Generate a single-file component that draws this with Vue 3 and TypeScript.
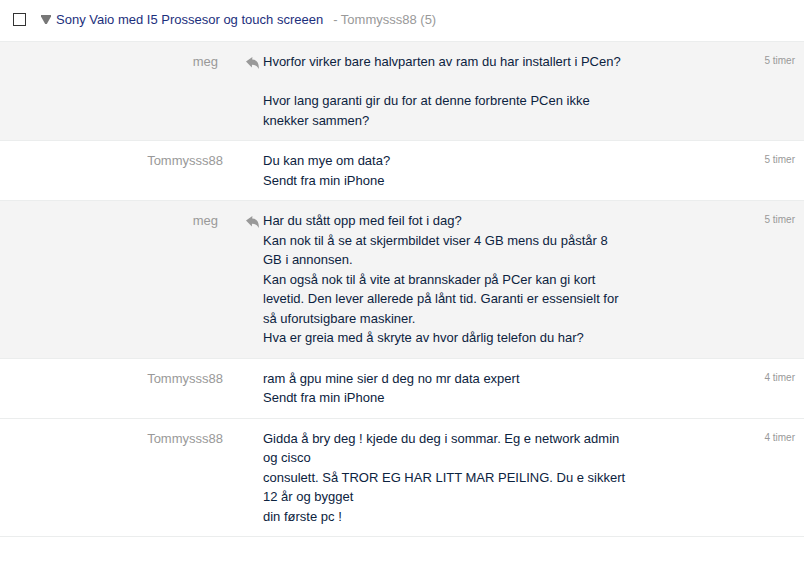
<script setup lang="ts">
interface Message {
  id: number
  sender: string
  own: boolean
  text: string
  time: string
}

const messages: Message[] = [
  {
    id: 1,
    sender: 'meg',
    own: true,
    text: 'Hvorfor virker bare halvparten av ram du har installert i PCen?\n\nHvor lang garanti gir du for at denne forbrente PCen ikke knekker sammen?',
    time: '5 timer',
  },
  { id: 2, sender: 'Tommysss88', own: false, text: 'Du kan mye om data?\nSendt fra min iPhone', time: '5 timer' },
  {
    id: 3,
    sender: 'meg',
    own: true,
    text: 'Har du stått opp med feil fot i dag?\nKan nok til å se at skjermbildet viser 4 GB mens du påstår 8 GB i annonsen.\nKan også nok til å vite at brannskader på PCer kan gi kort levetid. Den lever allerede på lånt tid. Garanti er essensielt for så uforutsigbare maskiner.\nHva er greia med å skryte av hvor dårlig telefon du har?',
    time: '5 timer',
  },
  {
    id: 4,
    sender: 'Tommysss88',
    own: false,
    text: 'ram å gpu mine sier d deg no mr data expert\nSendt fra min iPhone',
    time: '4 timer',
  },
  {
    id: 5,
    sender: 'Tommysss88',
    own: false,
    text: 'Gidda å bry deg ! kjede du deg i sommar. Eg e network admin og cisco\nconsulett. Så TROR EG HAR LITT MAR PEILING. Du e sikkert 12 år og bygget\ndin første pc !',
    time: '4 timer',
  },
]
</script>

<template>
  <main class="thread">
    <header class="thread-head">
      <input class="pick" type="checkbox" aria-label="Velg samtale" />
      <button class="toggle" type="button" aria-label="Skjul meldinger" aria-expanded="true">
        <svg width="10" height="9" viewBox="0 0 10 9" aria-hidden="true">
          <path d="M0 0H10V1.5L5.8 9H4.2L0 1.5Z" fill="#777" />
        </svg>
      </button>
      <a class="title" href="#">Sony Vaio med I5 Prossesor og touch screeen</a>
      <span class="party">- Tommysss88 (5)</span>
    </header>
    <article v-for="m in messages" :key="m.id" class="message" :class="{ own: m.own }">
      <span class="sender">{{ m.sender }}</span>
      <span class="reply">
        <svg v-if="m.own" width="13" height="12" viewBox="0 0 13 12" aria-hidden="true">
          <path d="M0 4.6L6.4 0L6.2 2.4C10.5 2.6 13.2 5.5 12.8 12C11.4 8.9 9.2 7.8 6 7.8L5.8 10.4Z" fill="#999" />
        </svg>
      </span>
      <p class="text">{{ m.text }}</p>
      <span class="time">{{ m.time }}</span>
    </article>
  </main>
</template>

<style>
body {
  background: #fff;
}
</style>

<style scoped>
.thread {
  font: 13px/1.5 Arial, "Liberation Sans", sans-serif;
  color: #0c2340;
}

.thread-head {
  display: flex;
  align-items: center;
  height: 39px;
  padding: 0 13px 2px;
  border-bottom: 1px solid #ebeded;
  box-sizing: content-box;
}

.pick {
  appearance: none;
  width: 13px;
  height: 13px;
  margin: 0 15px 0 0;
  border: 1px solid #333;
  background: #fff;
}

.pick:checked {
  background: #333;
}

.toggle {
  display: flex;
  margin: 0 5px 0 0;
  padding: 0;
  border: 0;
  background: none;
}

.title {
  color: #1c2f7c;
  text-decoration: none;
}

.party {
  margin-left: 10px;
  color: #999;
}

.message {
  display: grid;
  grid-template-columns: 223px 40px minmax(0, 366px) 1fr;
  padding: 10px 9px 10px 0;
  border-bottom: 1px solid #ebeded;
}

.own {
  background: #f4f4f4;
}

.sender {
  text-align: right;
  color: #999;
}

.own .sender {
  padding-right: 5px;
}

.reply {
  padding: 5px 4px 0 0;
  line-height: 0;
  text-align: right;
}

.text {
  margin: 0;
  white-space: pre-line;
}

.time {
  font-size: 10px;
  line-height: 18px;
  text-align: right;
  color: #999;
}
</style>
